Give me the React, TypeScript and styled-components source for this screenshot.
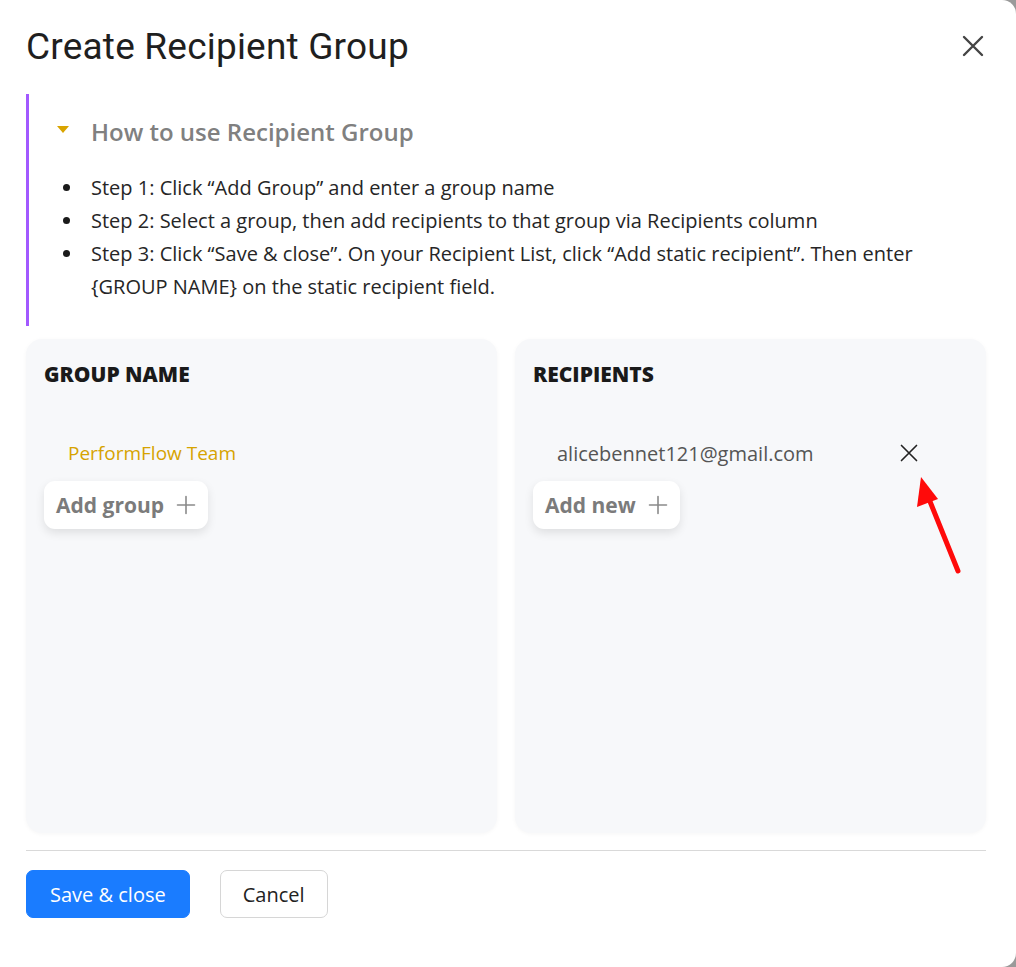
import React from "react";
import styled, { createGlobalStyle } from "styled-components";

const GlobalStyle = createGlobalStyle`
  html, body {
    margin: 0;
    padding: 0;
    background: #9a9a9a;
  }
  * {
    box-sizing: border-box;
  }
`;

const Modal = styled.div`
  position: relative;
  width: 1016px;
  height: 967px;
  background: #ffffff;
  border-radius: 0 14px 14px 0;
  padding: 26px 30px 0 26px;
  display: flex;
  flex-direction: column;
  font-family: "Open Sans", "Noto Sans", sans-serif;
  color: #222;
`;

const Header = styled.div`
  display: flex;
  align-items: center;
  justify-content: space-between;
  height: 40px;
  margin-bottom: 28px;
`;

const Title = styled.h1`
  margin: 0;
  font-family: Roboto, "Liberation Sans", sans-serif;
  font-weight: 400;
  font-size: 37px;
  color: #1f1f1f;
  letter-spacing: 0.2px;
`;

const CloseButton = styled.button`
  border: none;
  background: none;
  padding: 0;
  width: 26px;
  height: 26px;
  display: flex;
  align-items: center;
  justify-content: center;
  cursor: pointer;
`;

const Guide = styled.section`
  border-left: 3px solid #a259ff;
  padding: 21px 0 0 28px;
  height: 232px;
`;

const GuideHeading = styled.div`
  display: flex;
  align-items: center;
  gap: 22px;
  height: 32px;
  font-size: 24px;
  font-weight: 600;
  color: #808080;
  margin-bottom: 24px;
`;

const Caret = styled.span`
  width: 0;
  height: 0;
  border-left: 6px solid transparent;
  border-right: 6px solid transparent;
  border-top: 7px solid #d9a400;
  margin-top: -4px;
`;

const Steps = styled.ul`
  margin: 0;
  padding-left: 34px;
  list-style: none;
  font-size: 20px;
  line-height: 33px;
  color: #262626;
  max-width: 900px;
`;

const Step = styled.li`
  position: relative;

  &::before {
    content: "";
    position: absolute;
    left: -28px;
    top: 13px;
    width: 7px;
    height: 7px;
    border-radius: 50%;
    background: #1a1a1a;
  }
`;

const Columns = styled.div`
  display: grid;
  grid-template-columns: 1fr 1fr;
  gap: 18px;
  margin-top: 13px;
  height: 494px;
`;

const Panel = styled.div`
  background: #f7f8fa;
  border-radius: 16px;
  box-shadow: 0 1px 4px rgba(0, 0, 0, 0.04);
  padding: 22px 18px;
`;

const PanelTitle = styled.h2`
  margin: 0 0 49px;
  height: 26px;
  line-height: 26px;
  font-size: 21px;
  font-weight: 800;
  color: #1a1a1a;
`;

const ItemRow = styled.div`
  display: flex;
  align-items: center;
  justify-content: space-between;
  height: 34px;
  padding: 0 49px 0 24px;
`;

const ItemText = styled.span<{ $tone: "gold" | "gray" }>`
  font-size: ${(p) => (p.$tone === "gold" ? "19px" : "20px")};
  color: ${(p) => (p.$tone === "gold" ? "#d6a300" : "#555")};
`;

const AddButton = styled.button`
  margin-top: 11px;
  display: inline-flex;
  align-items: center;
  gap: 12px;
  height: 48px;
  padding: 0 12px;
  background: #fff;
  border: none;
  border-radius: 11px;
  box-shadow: 0 4px 10px rgba(0, 0, 0, 0.1);
  font-family: inherit;
  font-size: 21px;
  font-weight: 700;
  color: #7b7b7b;
  cursor: pointer;
`;

const Footer = styled.div`
  margin-top: 17px;
  border-top: 1px solid #d9d9d9;
  padding-top: 19px;
  display: flex;
  gap: 30px;
`;

const FooterButton = styled.button<{ $primary?: boolean }>`
  height: 48px;
  padding: 0 ${(p) => (p.$primary ? "23px" : "22px")};
  border-radius: 7px;
  border: 1px solid ${(p) => (p.$primary ? "#1a7cff" : "#d6d6d6")};
  background: ${(p) => (p.$primary ? "#1a7cff" : "#fff")};
  color: ${(p) => (p.$primary ? "#fff" : "#222")};
  font-family: inherit;
  font-size: 20px;
  cursor: pointer;
`;

const Annotation = styled.svg`
  position: absolute;
  left: 905px;
  top: 470px;
  pointer-events: none;
`;

const XIcon = ({ size, color, width }: { size: number; color: string; width: number }) => (
  <svg width={size} height={size} viewBox="0 0 24 24" fill="none">
    <path d="M3 3L21 21M21 3L3 21" stroke={color} strokeWidth={width} strokeLinecap="round" />
  </svg>
);

const PlusIcon = () => (
  <svg width="20" height="20" viewBox="0 0 20 20" fill="none">
    <path d="M10 1.5V18.5M1.5 10H18.5" stroke="#8a8a8a" strokeWidth="1.6" strokeLinecap="round" />
  </svg>
);

export default function App() {
  return (
    <>
      <GlobalStyle />
      <Modal>
        <Header>
          <Title>Create Recipient Group</Title>
          <CloseButton aria-label="Close">
            <XIcon size={24} color="#444" width={2.4} />
          </CloseButton>
        </Header>

        <Guide>
          <GuideHeading>
            <Caret />
            How to use Recipient Group
          </GuideHeading>
          <Steps>
            <Step>Step 1: Click “Add Group” and enter a group name</Step>
            <Step>Step 2: Select a group, then add recipients to that group via Recipients column</Step>
            <Step>
              Step 3: Click “Save &amp; close”. On your Recipient List, click “Add static recipient”. Then enter
              {" "}{"{GROUP NAME}"} on the static recipient field.
            </Step>
          </Steps>
        </Guide>

        <Columns>
          <Panel>
            <PanelTitle>GROUP NAME</PanelTitle>
            <ItemRow>
              <ItemText $tone="gold">PerformFlow Team</ItemText>
            </ItemRow>
            <AddButton>
              Add group <PlusIcon />
            </AddButton>
          </Panel>
          <Panel>
            <PanelTitle>RECIPIENTS</PanelTitle>
            <ItemRow>
              <ItemText $tone="gray">alicebennet121@gmail.com</ItemText>
              <XIcon size={20} color="#222" width={2} />
            </ItemRow>
            <AddButton>
              Add new <PlusIcon />
            </AddButton>
          </Panel>
        </Columns>

        <Footer>
          <FooterButton $primary>Save &amp; close</FooterButton>
          <FooterButton>Cancel</FooterButton>
        </Footer>

        <Annotation width="70" height="110" viewBox="0 0 70 110">
          <path d="M53 101L22 24" stroke="#ff0a0a" strokeWidth="5" strokeLinecap="round" />
          <path d="M16 7L12 37L33 29Z" fill="#ff0a0a" />
        </Annotation>
      </Modal>
    </>
  );
}
